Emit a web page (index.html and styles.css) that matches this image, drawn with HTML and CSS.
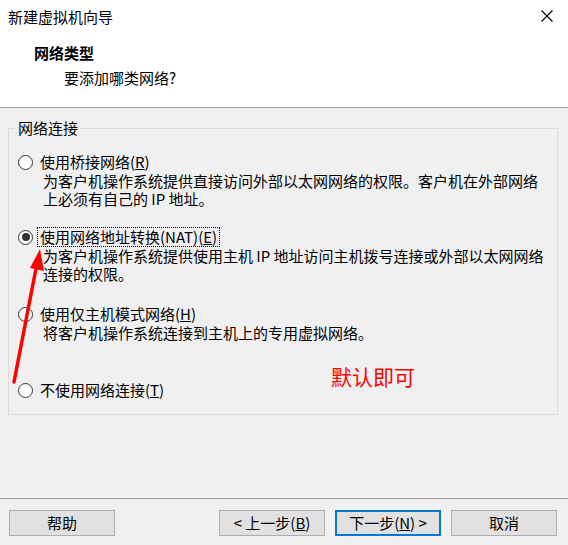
FILE: index.html
```html
<!DOCTYPE html>
<html lang="zh-CN">
<head>
<meta charset="utf-8">
<title>新建虚拟机向导</title>
<link rel="stylesheet" href="styles.css">
</head>
<body>
<div class="dialog">
  <div class="top">
    <div class="titlebar">
      <span class="title">新建虚拟机向导</span>
      <svg class="close" width="12" height="12" viewBox="0 0 12 12"><path d="M0.5 0.5 L11.5 11.5 M11.5 0.5 L0.5 11.5" stroke="#000" stroke-width="1.1" fill="none"/></svg>
    </div>
    <div class="heading">网络类型</div>
    <div class="subheading">要添加哪类网络?</div>
  </div>

  <fieldset class="group">
    <legend class="group-label">网络连接</legend>

    <div class="option opt1">
      <div class="option-row"><span class="radio"></span><span class="label">使用桥接网络(<u>R</u>)</span></div>
      <div class="desc">为客户机操作系统提供直接访问外部以太网网络的权限。客户机在外部网络<br>上必须有自己的 IP 地址。</div>
    </div>

    <div class="option opt2">
      <div class="option-row"><span class="radio checked"></span><span class="label focused">使用网络地址转换(NAT)(<u>E</u>)</span></div>
      <div class="desc">为客户机操作系统提供使用主机 IP 地址访问主机拨号连接或外部以太网网络<br>连接的权限。</div>
    </div>

    <div class="option opt3">
      <div class="option-row"><span class="radio"></span><span class="label">使用仅主机模式网络(<u>H</u>)</span></div>
      <div class="desc">将客户机操作系统连接到主机上的专用虚拟网络。</div>
    </div>

    <div class="option opt4">
      <div class="option-row"><span class="radio"></span><span class="label">不使用网络连接(<u>T</u>)</span></div>
    </div>
  </fieldset>

  <div class="footer">
    <button class="btn help">帮助</button>
    <button class="btn back">&lt; 上一步(<u>B</u>)</button>
    <button class="btn next">下一步(<u>N</u>) &gt;</button>
    <button class="btn cancel">取消</button>
  </div>

  <div class="note">默认即可</div>
  <svg class="arrow" width="568" height="545" viewBox="0 0 568 545">
    <line x1="14" y1="382" x2="36.5" y2="266" stroke="#ff0000" stroke-width="3.5" stroke-linecap="round"/>
    <polygon points="40,249 44,271 30,268" fill="#ff0000"/>
  </svg>
</div>
</body>
</html>
```

FILE: styles.css
```css
html, body {
  margin: 0;
  padding: 0;
}
body {
  background: #f0f0f0;
  font-family: "Noto Sans CJK SC", "Microsoft YaHei", sans-serif;
  font-size: 15px;
  color: #000;
}
.dialog {
  position: relative;
  width: 568px;
  height: 545px;
  overflow: hidden;
}
.top {
  background: #fff;
  height: 107px;
  border-bottom: 1px solid #a0a0a0;
}
.titlebar {
  height: 34px;
  display: flex;
  align-items: center;
  justify-content: space-between;
  padding: 0 15px 0 8px;
}
.title {
  line-height: 20px;
}
.close {
  display: block;
  margin-top: -2px;
}
.heading {
  font-weight: bold;
  line-height: 20px;
  margin-top: 9px;
  padding-left: 34px;
}
.subheading {
  line-height: 20px;
  margin-top: 5px;
  padding-left: 64px;
}
.group {
  margin: 10px 10px 0 8px;
  padding: 0 0 14px 0;
  border: 1px solid #dcdcdc;
  min-width: 0;
}
.group-label {
  margin-left: 6px;
  padding: 0 2px 0 3px;
  line-height: 20px;
}
.option-row {
  display: flex;
  align-items: center;
  height: 20px;
  padding-left: 9px;
}
.radio {
  width: 13px;
  height: 13px;
  border: 1px solid #333;
  border-radius: 50%;
  background: #fff;
  position: relative;
  flex: none;
}
.radio.checked::after {
  content: "";
  position: absolute;
  left: 2.5px;
  top: 2.5px;
  width: 8px;
  height: 8px;
  border-radius: 50%;
  background: #333;
}
.label {
  margin-left: 4px;
  padding: 0 2px;
  line-height: 18px;
  border: 1px solid transparent;
  white-space: nowrap;
}
.label.focused {
  border: 1px dotted #000;
}
.desc {
  padding-left: 34px;
  line-height: 18px;
  white-space: nowrap;
}
.opt1 { margin-top: 14px; }
.opt2 { margin-top: 19px; }
.opt3 { margin-top: 21px; }
.opt4 { margin-top: 38px; }
.footer {
  margin-top: 83px;
  border-top: 1px solid #a0a0a0;
  padding: 11px 11px 0 9px;
  display: flex;
  gap: 10px;
}
.btn {
  box-sizing: border-box;
  width: 106px;
  height: 26px;
  background: #e1e1e1;
  border: 1px solid #adadad;
  font-family: inherit;
  font-size: 15px;
  color: #000;
  padding: 0;
  line-height: 22px;
}
.btn.back {
  margin-left: auto;
}
.btn.next {
  border: 2px solid #0078d7;
}
.note {
  position: absolute;
  left: 331px;
  top: 365px;
  font-size: 21px;
  line-height: 22px;
  color: #ff0000;
}
.arrow {
  position: absolute;
  left: 0;
  top: 0;
  pointer-events: none;
}
```
